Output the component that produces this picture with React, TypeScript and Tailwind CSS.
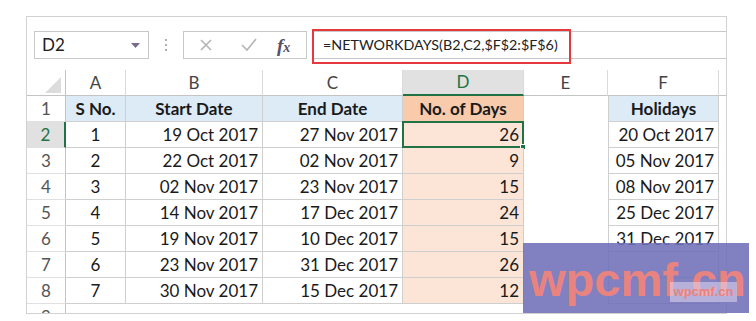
import React from "react";

const rows = [
  ["1", "19 Oct 2017", "27 Nov 2017", "26", "20 Oct 2017"],
  ["2", "22 Oct 2017", "02 Nov 2017", "9", "05 Nov 2017"],
  ["3", "02 Nov 2017", "23 Nov 2017", "15", "08 Nov 2017"],
  ["4", "14 Nov 2017", "17 Dec 2017", "24", "25 Dec 2017"],
  ["5", "19 Nov 2017", "10 Dec 2017", "15", "31 Dec 2017"],
  ["6", "23 Nov 2017", "31 Dec 2017", "26", ""],
  ["7", "30 Nov 2017", "15 Dec 2017", "12", ""],
];

const font = { fontFamily: "Lato, 'Open Sans', sans-serif" };

export default function App() {
  const colHead = "h-[26px] flex items-center justify-center border-r border-[#dadada] border-b border-b-[#c4c4c4] text-[#444] text-[17px]";
  return (
    <div className="w-[756px] h-[321px] bg-white pl-[26px] pt-[16px] relative overflow-hidden" style={font}>
      <div className="w-[701px] h-[298px] border border-[#d2d2d2] flex flex-col overflow-hidden">
        {/* formula bar */}
        <div className="mt-[14px] h-[28px] flex items-stretch">
          <div className="ml-[7px] w-[115px] border border-[#c8c8c8] flex items-center justify-between pl-[7px] pr-[8px]">
            <span className="text-[17px] text-[#222]">D2</span>
            <svg width="9" height="5" viewBox="0 0 9 5"><path d="M0 0h9L4.5 5z" fill="#7c6a8e" /></svg>
          </div>
          <div className="w-[34px] flex flex-col items-center justify-center gap-[3px]">
            <span className="w-[2px] h-[2px] bg-[#b0b0b0]" />
            <span className="w-[2px] h-[2px] bg-[#b0b0b0]" />
            <span className="w-[2px] h-[2px] bg-[#b0b0b0]" />
          </div>
          <div className="w-[124px] border border-[#c8c8c8] flex items-center pl-[15px]">
            <svg width="14" height="14" viewBox="0 0 14 14"><path d="M2 2l10 10M12 2L2 12" stroke="#b4b4b4" strokeWidth="1.6" /></svg>
            <svg className="ml-[28px]" width="16" height="14" viewBox="0 0 16 14"><path d="M1 7l5 5L15 1" stroke="#b4b4b4" strokeWidth="1.6" fill="none" /></svg>
            <span className="ml-[20px] text-[19px] leading-none italic font-bold text-[#5a4f66]" style={{ fontFamily: "'Liberation Serif', serif" }}>f<span className="text-[14px]">x</span></span>
          </div>
          <div className="ml-[5px] flex-1 border border-[#c8c8c8] border-r-0 relative flex items-center pl-[10px]">
            <span className="text-[14.3px] text-[#222]">=NETWORKDAYS(B2,C2,$F$2:$F$6)</span>
            <div className="absolute left-[-1px] top-[-3px] w-[259px] h-[35px] border-[2.5px] border-[#e5383f]" />
          </div>
        </div>
        {/* grid */}
        <div className="mt-[11px] grid grid-cols-[39px_60px_137px_140px_121px_84px_111px_1fr] grid-rows-[26px_repeat(8,26px)_9px]">
          {/* header row */}
          <div className="h-[26px] border-r border-[#c4c4c4] border-b border-b-[#c4c4c4] flex items-end justify-end pr-[4px] pb-[2px]">
            <svg width="16" height="16" viewBox="0 0 16 16"><path d="M16 0V16H0z" fill="#dcdcdc" /></svg>
          </div>
          <div className={colHead}>A</div>
          <div className={colHead}>B</div>
          <div className={colHead}>C</div>
          <div className="h-[26px] flex items-center justify-center border-r border-[#dadada] bg-[#e1e1e1] border-b-2 border-b-[#217346] text-[#217346] text-[17px]">D</div>
          <div className={colHead}>E</div>
          <div className={colHead}>F</div>
          <div className="h-[26px] border-b border-[#c4c4c4]" />

          {/* row 1 */}
          <div className="border-r border-[#c4c4c4] border-b border-b-[#e0e0e0] flex items-center justify-center text-[17px] text-[#555]">1</div>
          <div className="bg-[#ddebf7] border-r border-b border-[#cfcfcf] flex items-center justify-center text-[17px] font-bold text-[#1a1a1a]">S No.</div>
          <div className="bg-[#ddebf7] border-r border-b border-[#cfcfcf] flex items-center justify-center text-[17px] font-bold text-[#1a1a1a]">Start Date</div>
          <div className="bg-[#ddebf7] border-r border-b border-[#cfcfcf] flex items-center justify-center text-[17px] font-bold text-[#1a1a1a]">End Date</div>
          <div className="bg-[#f8cbad] border-r border-b border-[#cfcfcf] flex items-center justify-center text-[17px] font-bold text-[#1a1a1a]">No. of Days</div>
          <div />
          <div className="bg-[#ddebf7] border-l border-r border-b border-[#cfcfcf] flex items-center justify-center text-[17px] font-bold text-[#1a1a1a]">Holidays</div>
          <div />

          {rows.map((r, i) => {
            const sel = i === 0;
            return (
              <React.Fragment key={i}>
                <div
                  className={
                    sel
                      ? "bg-[#e1e1e1] border-r-2 border-[#217346] border-b border-b-[#e0e0e0] flex items-center justify-center text-[17px] text-[#217346]"
                      : "border-r border-[#c4c4c4] border-b border-b-[#e0e0e0] flex items-center justify-center text-[17px] text-[#555]"
                  }
                >
                  {i + 2}
                </div>
                <div className="border-r border-b border-[#cfcfcf] flex items-center justify-center text-[17px] text-[#1a1a1a]">{r[0]}</div>
                <div className="border-r border-b border-[#cfcfcf] flex items-center justify-end pr-[4px] text-[17px] text-[#1a1a1a]">{r[1]}</div>
                <div className="border-r border-b border-[#cfcfcf] flex items-center justify-end pr-[4px] text-[17px] text-[#1a1a1a]">{r[2]}</div>
                <div className="bg-[#fce4d6] border-r border-b border-[#cfcfcf] flex items-center justify-end pr-[4px] text-[17px] text-[#1a1a1a] relative">
                  {r[3]}
                  {sel && (
                    <div className="absolute left-[-1px] top-[-1px] right-[-1px] bottom-[-1px] border-2 border-[#217346]">
                      <div className="absolute right-[-4px] bottom-[-4px] w-[6px] h-[6px] bg-[#217346] border border-white" />
                    </div>
                  )}
                </div>
                <div />
                <div className="border-l border-r border-b border-[#cfcfcf] flex items-center justify-end pr-[4px] text-[17px] text-[#1a1a1a]">{r[4]}</div>
                <div />
              </React.Fragment>
            );
          })}

          {/* row 9 partial */}
          <div className="border-r border-[#c4c4c4] overflow-hidden flex justify-center text-[17px] text-[#555] leading-[26px]">9</div>
        </div>
      </div>

      {/* watermark */}
      <div className="absolute left-[523px] top-[243px] w-[226px] h-[70px] bg-[rgba(112,112,184,0.88)]">
        <div className="absolute left-[6px] top-[9px] text-[47px] leading-[56px] font-bold text-[#e8837f]" style={{ fontFamily: "'Liberation Sans', Arial, sans-serif" }}>wpcmf.cn</div>
        <div className="absolute left-[147px] top-[39px] w-[67px] h-[20px] bg-[rgba(225,215,240,0.55)] flex items-center justify-center text-[13px] font-bold text-[#e8837f]" style={{ fontFamily: "'Liberation Sans', Arial, sans-serif" }}>wpcmf.cn</div>
      </div>
    </div>
  );
}
